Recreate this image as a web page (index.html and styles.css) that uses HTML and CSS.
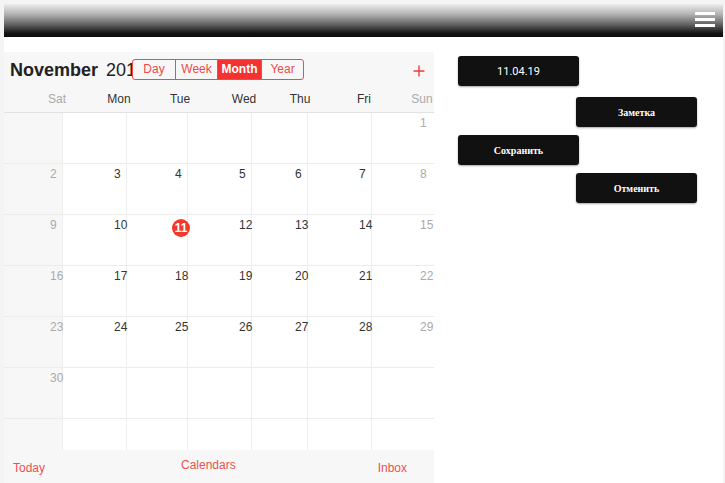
FILE: index.html
```html
<!DOCTYPE html>
<html lang="ru">
<head>
<meta charset="utf-8">
<title>Calendar</title>
<link rel="stylesheet" href="styles.css">
</head>
<body>
<div class="page">
  <header class="topbar">
    <div class="burger"><span></span><span></span><span></span></div>
  </header>
  <main class="main">
    <section class="cal">
      <div class="toolbar">
        <div class="title"><b>November</b> 201</div>
        <div class="seg">
          <span class="seg-item">Day</span>
          <span class="seg-item">Week</span>
          <span class="seg-item active">Month</span>
          <span class="seg-item">Year</span>
        </div>
        <div class="plus">
          <svg width="12" height="12" viewBox="0 0 12 12"><path d="M6 0.5V11.5M0.5 6H11.5" stroke="#f23b3b" stroke-width="1.4" fill="none"/></svg>
        </div>
      </div>
      <div class="weekdays">
        <div class="wd end"><span>Sat</span></div>
        <div class="wd"><span>Mon</span></div>
        <div class="wd"><span>Tue</span></div>
        <div class="wd"><span>Wed</span></div>
        <div class="wd"><span>Thu</span></div>
        <div class="wd"><span>Fri</span></div>
        <div class="wd end"><span>Sun</span></div>
      </div>
      <div class="grid">
        <div class="cell sat"></div><div class="cell"></div><div class="cell"></div><div class="cell"></div><div class="cell"></div><div class="cell"></div><div class="cell end"><span>1</span></div>
        <div class="cell sat end"><span>2</span></div><div class="cell"><span>3</span></div><div class="cell"><span>4</span></div><div class="cell"><span>5</span></div><div class="cell"><span>6</span></div><div class="cell"><span>7</span></div><div class="cell end"><span>8</span></div>
        <div class="cell sat end"><span>9</span></div><div class="cell"><span>10</span></div><div class="cell"><span class="today">11</span></div><div class="cell"><span>12</span></div><div class="cell"><span>13</span></div><div class="cell"><span>14</span></div><div class="cell end"><span>15</span></div>
        <div class="cell sat end"><span>16</span></div><div class="cell"><span>17</span></div><div class="cell"><span>18</span></div><div class="cell"><span>19</span></div><div class="cell"><span>20</span></div><div class="cell"><span>21</span></div><div class="cell end"><span>22</span></div>
        <div class="cell sat end"><span>23</span></div><div class="cell"><span>24</span></div><div class="cell"><span>25</span></div><div class="cell"><span>26</span></div><div class="cell"><span>27</span></div><div class="cell"><span>28</span></div><div class="cell end"><span>29</span></div>
        <div class="cell sat end"><span>30</span></div><div class="cell"></div><div class="cell"></div><div class="cell"></div><div class="cell"></div><div class="cell"></div><div class="cell"></div>
        <div class="cell sat"></div><div class="cell"></div><div class="cell"></div><div class="cell"></div><div class="cell"></div><div class="cell"></div><div class="cell"></div>
      </div>
      <footer class="calfoot">
        <span class="f-today">Today</span>
        <span class="f-cal">Calendars</span>
        <span class="f-inbox">Inbox</span>
      </footer>
    </section>
    <aside class="side">
      <button class="btn btn-date left">11.04.19</button>
      <button class="btn right">Заметка</button>
      <button class="btn left">Сохранить</button>
      <button class="btn right">Отменить</button>
    </aside>
  </main>
</div>
</body>
</html>
```
FILE: styles.css
```css
html, body {
  margin: 0;
  height: 100%;
}
body {
  background: #f4f4f4;
  padding: 4px 2px 0 4px;
  box-sizing: border-box;
  font-family: "Liberation Sans", Arial, sans-serif;
  overflow: hidden;
}
.page {
  background: #fff;
  height: 100%;
}
.topbar {
  height: 33px;
  background: linear-gradient(to bottom, #ececec 0%, #b5b5b5 30%, #5a5a5a 65%, #151515 88%, #0c0c0c 100%);
  display: flex;
  justify-content: flex-end;
  align-items: flex-start;
}
.burger {
  display: flex;
  flex-direction: column;
  gap: 3px;
  padding-top: 8px;
  margin-right: 8px;
}
.burger span {
  display: block;
  width: 20px;
  height: 3px;
  background: #fff;
}
.main {
  display: flex;
  align-items: flex-start;
  padding-top: 15px;
}
.cal {
  width: 430px;
  flex: none;
  overflow: hidden;
}
.toolbar {
  height: 36px;
  background: #f7f7f7;
  display: flex;
  align-items: flex-start;
}
.title {
  width: 122px;
  margin-left: 6px;
  white-space: nowrap;
  overflow: hidden;
  font-size: 18px;
  line-height: 22px;
  color: #222;
  padding-top: 7px;
}
.title b {
  font-weight: bold;
  margin-right: 3px;
}
.seg {
  display: flex;
  margin-top: 7px;
  border: 1.5px solid #f24a4a;
  border-radius: 3px;
  height: 19px;
  overflow: hidden;
}
.seg-item {
  font-size: 12px;
  line-height: 19px;
  color: #f04848;
  text-align: center;
  width: 41px;
  border-left: 1px solid #f24a4a;
}
.seg-item:first-child {
  border-left: 0;
  width: 42px;
}
.seg-item.active {
  background: #f43232;
  color: #fff;
  font-weight: bold;
  width: 43px;
}
.plus {
  margin-left: auto;
  margin-right: 9px;
  padding-top: 13px;
  line-height: 0;
}
.weekdays {
  display: grid;
  grid-template-columns: 59px 64px 61px 64px 56px 64px 62px;
  height: 25px;
  background: #f7f7f7;
  border-bottom: 1px solid #e2e2e2;
  box-sizing: border-box;
}
.wd {
  display: flex;
  justify-content: flex-end;
  font-size: 12px;
  line-height: 14px;
  padding-top: 4px;
  color: #333;
}
.wd span {
  display: flex;
  justify-content: center;
  width: 0;
  margin-right: 8px;
  white-space: nowrap;
}
.wd:first-child span {
  margin-right: 6px;
}
.wd:last-child span {
  margin-right: 12px;
}
.wd.end {
  color: #aaa;
}
.grid {
  display: grid;
  grid-template-columns: 59px 64px 61px 64px 56px 64px 62px;
  grid-auto-rows: 51px;
  height: 337px;
  overflow: hidden;
}
.cell {
  border-bottom: 1px solid #ececec;
  border-right: 1px solid #eeeeee;
  box-sizing: border-box;
  display: flex;
  justify-content: flex-end;
  align-items: flex-start;
  padding-top: 3px;
  font-size: 12px;
  line-height: 14px;
  color: #333;
}
.cell:nth-child(7n) {
  border-right: 0;
}
.cell:nth-child(7n) span {
  margin-right: 2px;
}
.cell.sat {
  background: #f7f7f7;
}
.cell span {
  width: 12px;
  white-space: nowrap;
}
.cell.end {
  color: #aaa;
}
.cell span.today {
  width: 18px;
  height: 18px;
  border-radius: 50%;
  background: #f2392c;
  color: #fff;
  font-weight: bold;
  display: flex;
  align-items: center;
  justify-content: center;
  line-height: 18px;
  margin-top: 1px;
  margin-right: -3px;
}
.calfoot {
  height: 33px;
  background: #f7f7f7;
  display: flex;
  justify-content: space-between;
  align-items: flex-start;
  padding: 0 27px 0 9px;
  font-size: 12px;
  line-height: 14px;
  color: #ee5050;
}
.f-today { padding-top: 11px; }
.f-cal { padding-top: 8px; margin-right: 6px; }
.f-inbox { padding-top: 11px; }
.side {
  width: 239px;
  margin-left: 24px;
  margin-top: 4px;
  display: flex;
  flex-direction: column;
}
.btn {
  width: 121px;
  height: 30px;
  background: #111;
  color: #fff;
  border: 0;
  border-radius: 3px;
  box-shadow: 0 1px 2px rgba(0, 0, 0, 0.35);
  font-family: "Liberation Serif", "Times New Roman", serif;
  font-weight: bold;
  font-size: 10px;
  padding: 0;
  margin-bottom: 8px;
}
.btn.left { align-self: flex-start; }
.btn.right { align-self: flex-end; }
.btn-date {
  font-family: Roboto, "Liberation Sans", sans-serif;
  font-weight: normal;
  font-size: 11px;
  margin-bottom: 11px;
}
```
